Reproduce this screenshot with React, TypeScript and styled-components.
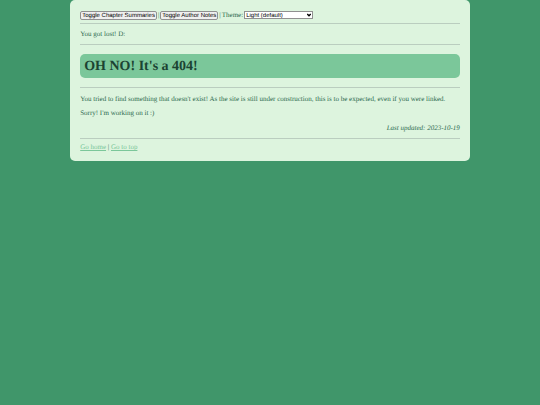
import React, { useState } from "react";
import styled, { createGlobalStyle } from "styled-components";

const GlobalStyle = createGlobalStyle`
  * { box-sizing: border-box; }
  body {
    margin: 0;
    background: #40966a;
    color: #2d6a4f;
    font: 7px/8px "Liberation Serif", "Times New Roman", serif;
    text-rendering: geometricPrecision;
  }
`;

const Page = styled.main`
  width: 74%;
  margin: 0 auto;
  padding: 10px;
  background: #ddf4de;
  border-radius: 5px;
`;

const Toolbar = styled.div`
  display: flex;
  align-items: center;
  gap: 1px;
  height: 10px;
`;

const ToggleButton = styled.button`
  height: 9px;
  padding: 1px 1px 0;
  border: 1px solid #909090;
  border-radius: 2px;
  background: #efefef;
  color: #000;
  font: 6px/6px "Liberation Sans", Arial, sans-serif;
  text-rendering: geometricPrecision;
  white-space: nowrap;
`;

const SelectBox = styled.span`
  position: relative;
  display: flex;
  width: 69px;
`;

const Select = styled.select`
  appearance: none;
  width: 100%;
  height: 8px;
  padding: 1px 8px 0 1px;
  border: 1px solid #909090;
  border-radius: 0;
  background: #fff;
  color: #000;
  font: 6px/6px "Liberation Sans", Arial, sans-serif;
  text-rendering: geometricPrecision;
`;

const Arrow = styled.svg`
  position: absolute;
  right: 2px;
  top: 2px;
  width: 4px;
  height: 4px;
  pointer-events: none;
`;

const Rule = styled.hr<{ $before: number; $after: number }>`
  height: 1px;
  margin: ${(p) => p.$before}px 0 ${(p) => p.$after}px;
  border: 0;
  background: #bacdbf;
`;

const Title = styled.h1`
  margin: 0;
  padding: 5px 4px 3px;
  border-radius: 5px;
  background: #7bc79a;
  color: #1b4332;
  font-size: 14px;
  line-height: 16px;
`;

const Text = styled.p`
  margin: 0;
  & + & { margin-top: 6px; }
`;

const Updated = styled(Text)`
  && { margin-top: 7px; }
  text-align: right;
  font-style: italic;
`;

const Link = styled.a`
  color: #7bc79a;
`;

export default function App() {
  const [theme, setTheme] = useState("light");
  return (
    <>
      <GlobalStyle />
      <Page id="top">
        <Toolbar>
          <ToggleButton type="button">Toggle Chapter Summaries</ToggleButton>
          <span>|</span>
          <ToggleButton type="button">Toggle Author Notes</ToggleButton>
          <span>|</span>
          <label htmlFor="theme">Theme:</label>
          <SelectBox>
            <Select id="theme" value={theme} onChange={(e) => setTheme(e.target.value)}>
              <option value="light">Light (default)</option>
              <option value="dark">Dark</option>
            </Select>
            <Arrow viewBox="0 0 4 4" aria-hidden="true">
              <path d="M0.3 1 L2 2.8 L3.7 1" fill="none" stroke="#000" strokeWidth="1.3" />
            </Arrow>
          </SelectBox>
        </Toolbar>
        <Rule $before={3} $after={6} />
        <Text>You got lost! D:</Text>
        <Rule $before={6} $after={9} />
        <Title>OH NO! It's a 404!</Title>
        <Rule $before={9} $after={7} />
        <Text>
          You tried to find something that doesn't exist! As the site is still under construction, this is to be
          expected, even if you were linked.
        </Text>
        <Text>Sorry! I'm working on it :)</Text>
        <Updated>Last updated: 2023-10-19</Updated>
        <Rule $before={6} $after={4} />
        <nav>
          <Link href="#home">Go home</Link> | <Link href="#top">Go to top</Link>
        </nav>
      </Page>
    </>
  );
}
